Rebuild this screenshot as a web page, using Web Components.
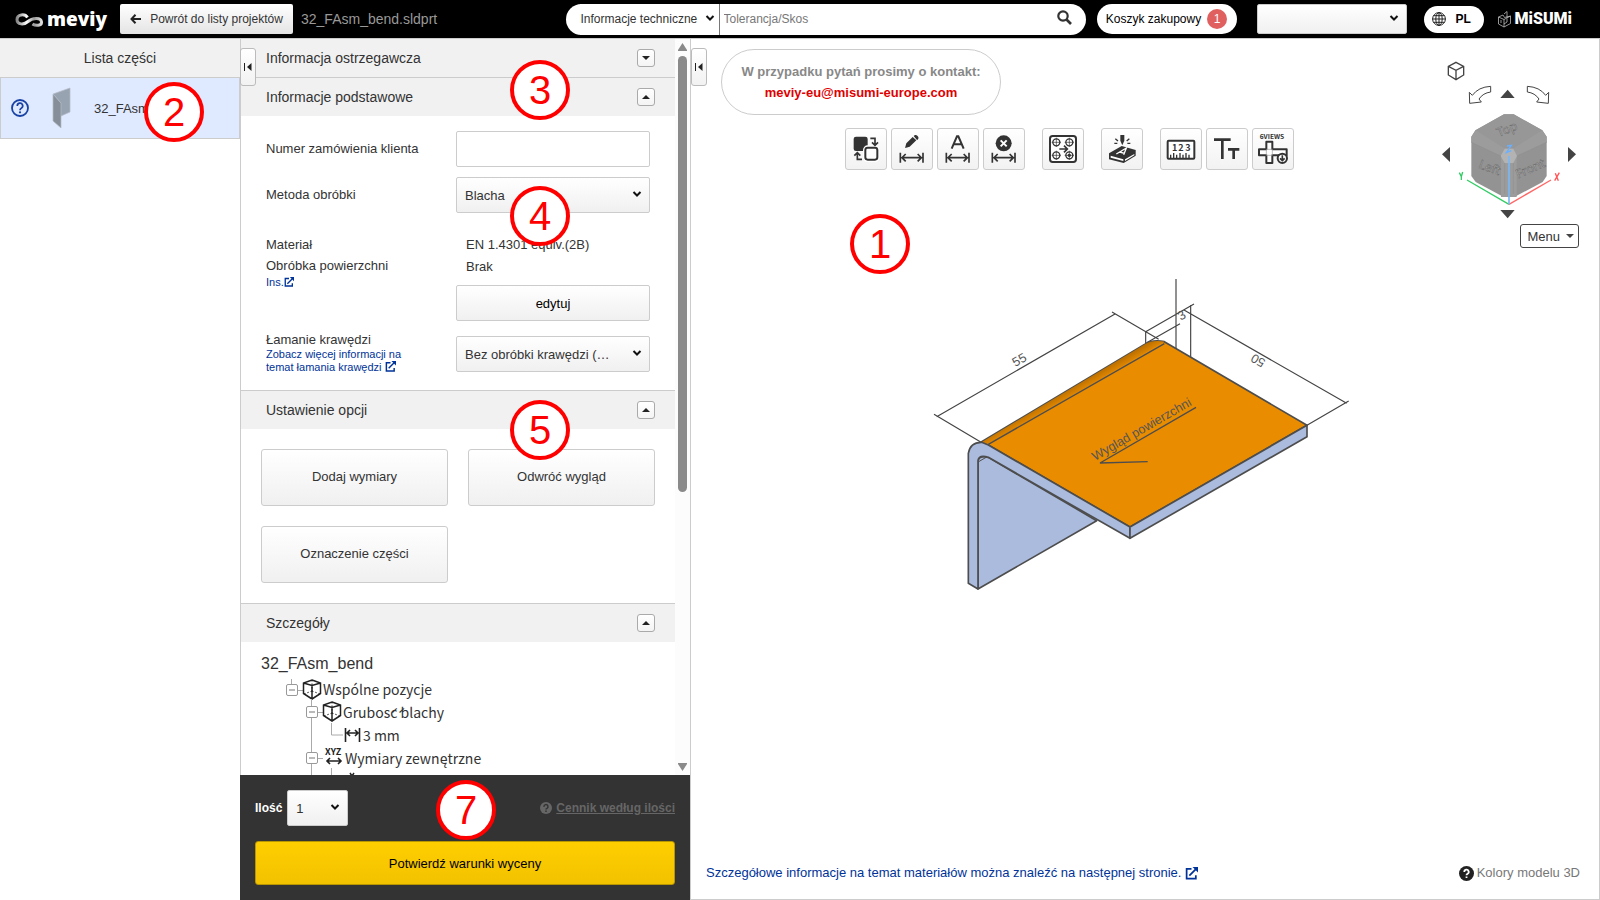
<!DOCTYPE html>
<html lang="pl">
<head>
<meta charset="utf-8">
<title>meviy – 32_FAsm_bend.sldprt</title>
<style>
  html, body { margin: 0; height: 100%; }
  body { font-family: "Liberation Sans", Arial, sans-serif; color: #333; background: #fff; }
</style>
</head>
<body>
<meviy-app></meviy-app>
<script>
const base = `
  *, *::before, *::after { box-sizing: border-box; }
  button, input, select { font: inherit; color: inherit; margin: 0; }
  button { cursor: pointer; padding: 0; }
  a { color: #039; text-decoration: none; }
  svg { display: block; flex: none; }
`;
const define = (name, css, html) => customElements.define(name, class extends HTMLElement {
  constructor() {
    super();
    const root = this.attachShadow({ mode: 'open' });
    const t = document.createElement('template');
    t.innerHTML = `<style>${base}${css}</style>${typeof html === 'function' ? html(this) : html}`;
    root.append(t.content.cloneNode(true));
  }
});
const chevron = `<svg class="chev" width="10" height="8" viewBox="0 0 10 8" aria-hidden="true"><path d="M1.500 2 5 5.500 8.500 2" fill="none" stroke="#111" stroke-width="2"/></svg>`;
const external = (s) => `<svg class="ext" width="${s}" height="${s}" viewBox="0 0 12 12" aria-hidden="true"><path d="M6 1.800H1.500v9H10V7.500M4 8 10 2" fill="none" stroke="#039" stroke-width="1.600"/><path d="M7 0h5v5z" fill="#039"/></svg>`;
const selectCss = `
  .select { position: relative; display: block; }
  .select select { appearance: none; width: 100%; height: 100%; padding: 0 30px 0 8px; border: 1px solid #ccc; border-radius: 2px; background: linear-gradient(#fff, #f0f0f0); font-size: 13px; text-overflow: ellipsis; }
  .select .chev { position: absolute; right: 8px; top: calc(50% - 5px); pointer-events: none; }
`;

/* Numbered callout that floats over the part of the screen it explains */
define('call-out', `
  :host { position: absolute; z-index: 5; width: 60px; height: 60px; border: 4px solid #f00; border-radius: 50%; background: #fff; color: #f00; font-size: 40px; line-height: 52px; text-align: center; pointer-events: none; }
`, `<slot></slot>`);

define('side-tab', `
  :host { position: absolute; z-index: 4; display: block; top: 9px; left: 0; }
  button { display: grid; place-items: center; width: 16px; height: 38px; border: 1px solid #bbb; border-radius: 3px; background: linear-gradient(#fff, #f2f2f2); }
`, `<button aria-label="Zwiń panel"><svg width="8" height="8" viewBox="0 0 8 8"><path d="M.5 0v8" stroke="#222"/><path d="M7.500 0v8L3 4z" fill="#222"/></svg></button>`);

define('app-header', `
  :host { display: flex; align-items: center; height: 38px; padding: 0 28px 0 15px; background: #000; font-size: 12px; }
  .logo { display: flex; align-items: center; gap: 3px; width: 105px; color: #fff; font: 800 19px/20px "Open Sans", "Noto Sans", sans-serif; }
  .logo svg { margin-top: 2px; }
  .back { display: flex; align-items: center; justify-content: center; gap: 9px; width: 173px; height: 30px; border: 0; border-radius: 2px; background: linear-gradient(#fff, #e4e4e4); }
  .file { margin-left: 8px; font-size: 14px; color: #999; }
  .search { display: flex; width: 520px; height: 31px; margin-left: auto; border-radius: 16px; background: #fff; overflow: hidden; }
  .search .select { width: 154px; border-right: 1px solid #777; }
  .search .select select { padding: 0 16px 0 15px; border: 0; background: none; font-size: 12px; }
  .search .select .chev { right: 4px; }
  .search input { flex: 1; min-width: 0; border: 0; outline: 0; padding: 0 4px; background: none; }
  .search input::placeholder { color: #777; opacity: 1; }
  .search button { width: 42px; border: 0; background: none; display: grid; place-items: center; }
  .search button svg { margin-bottom: 3px; }
  .cart { display: flex; align-items: center; justify-content: center; gap: 6px; width: 140px; height: 30px; margin-left: 11px; border-radius: 15px; background: #fff; color: #000; white-space: nowrap; }
  .cart b { width: 20px; height: 20px; border-radius: 10px; background: #e06060; color: #fff; font-weight: 400; line-height: 20px; text-align: center; }
  .user { width: 150px; height: 30px; margin-left: 20px; }
  .user select { border: 0; background: linear-gradient(#fff, #e2e2e2); }
  .user .chev { right: 6px; }
  .lang { display: flex; align-items: center; gap: 10px; width: 60px; height: 27px; margin-left: 17px; padding: 0 8px; border: 0; border-radius: 14px; background: #fff; color: #000; font-weight: 700; }
  .brand { display: flex; align-items: center; gap: 4px; margin-left: 14px; color: #fff; font: 900 16px/20px Roboto, sans-serif; }
` + selectCss, `
  <a class="logo" href="#"><svg width="29" height="15" viewBox="0 0 29 15"><defs><linearGradient id="g"><stop offset="0" stop-color="#888"/><stop offset=".4" stop-color="#fff"/><stop offset=".7" stop-color="#999"/><stop offset="1" stop-color="#ddd"/></linearGradient></defs><path d="M12.500 4.500C10 .5 2 1 2 6.500 2 12 9 12 13 8.500 17 5 26 4 26.500 9c.3 4-6 4-9 2" fill="none" stroke="url(#g)" stroke-width="3"/></svg>meviy</a>
  <button class="back"><svg width="11" height="10" viewBox="0 0 11 10"><path d="M5.500 .8 1.500 5l4 4.200M1.500 5H11" fill="none" stroke="#222" stroke-width="2"/></svg>Powrót do listy projektów</button>
  <span class="file">32_FAsm_bend.sldprt</span>
  <form class="search" onsubmit="return false">
    <span class="select"><select aria-label="Kategoria"><option>Informacje techniczne</option></select>${chevron}</span>
    <input type="text" placeholder="Tolerancja/Skos" aria-label="Szukaj">
    <button aria-label="Szukaj"><svg width="15" height="15" viewBox="0 0 15 15"><circle cx="6" cy="6" r="4.700" fill="none" stroke="#333" stroke-width="2.200"/><path d="m9.500 9.500 4.500 4.500" stroke="#333" stroke-width="2.600"/></svg></button>
  </form>
  <a class="cart" href="#">Koszyk zakupowy <b>1</b></a>
  <span class="select user"><select aria-label="Konto"><option></option></select>${chevron}</span>
  <button class="lang"><svg width="14" height="14" viewBox="0 0 14 14"><g fill="none" stroke="#222"><circle cx="7" cy="7" r="6.400"/><ellipse cx="7" cy="7" rx="3.200" ry="6.400"/><path d="M7 .5v13M.5 7h13M1.500 3.700h11M1.500 10.300h11"/></g></svg>PL</button>
  <a class="brand" href="#"><svg width="13" height="17" viewBox="0 0 13 17"><path d="M.5 6 6 8.500v7.500L.5 13zM6 8.500 12.500 5v7.500L6 16M.5 6 5 4l1.500 2.500L12.500 5M6 3l3-2.500v7M3 9v3M9 8v3l-3 2" fill="none" stroke="#bbb" stroke-width=".8"/></svg>MiSUMi</a>
`);

define('parts-list', `
  :host { display: block; position: relative; width: 240px; flex: none; }
  h2 { margin: 0; height: 38px; background: #f1f1f1; font-size: 14px; font-weight: 400; line-height: 38px; text-align: center; }
  .part { display: flex; align-items: center; width: 100%; height: 62px; padding: 0 10px; border: 1px solid #ccc; background: #dfe9ff; font-size: 13px; text-align: left; }
  .thumb { margin-left: 23px; }
  .name { margin-left: 23px; }
  call-out { left: 144px; top: 43px; }
`, `
  <h2>Lista części</h2>
  <button class="part">
    <svg width="18" height="18" viewBox="0 0 18 18"><circle cx="9" cy="9" r="8" fill="none" stroke="#1741a5" stroke-width="1.800"/><path d="M6.300 7a2.700 2.700 0 1 1 4 2.200c-.9.500-1.300.9-1.300 2" fill="none" stroke="#1741a5" stroke-width="1.700"/><circle cx="9" cy="13.300" r="1.100" fill="#1741a5"/></svg>
    <svg class="thumb" width="19" height="42" viewBox="0 0 19 42"><path d="M1 7 18 1v24L9 29V16z" fill="#98a3b1"/><path d="m1 7 8 9v25l-8-7z" fill="#868f99"/><path d="M1 7 18 1v24l-9 4M1 7l8 9v25l-8-7z" fill="none" stroke="#b4bcc6" stroke-width=".7"/></svg>
    <span class="name">32_FAsm_bend</span>
  </button>
  <call-out>2</call-out>
`);

/* Collapsible section: title attribute "heading", body in the slot */
define('fold-section', `
  :host { display: block; position: relative; }
  header { display: flex; align-items: center; justify-content: space-between; height: 39px; padding: 0 20px 0 25px; border-top: 1px solid #ccc; background: #f1f1f1; }
  :host([first]) header { height: 38px; border-top: 0; }
  h2 { margin: 0; font-size: 14px; font-weight: 400; line-height: 20px; }
  button { display: grid; place-items: center; width: 18px; height: 18px; border: 1px solid #aaa; border-radius: 3px; background: linear-gradient(#fff, #f4f4f4); }
`, (el) => `
  <header><h2>${el.getAttribute('heading')}</h2><button aria-label="Zwiń lub rozwiń"><svg width="8" height="4" viewBox="0 0 8 4"><path d="${el.hasAttribute('closed') ? 'M0 0h8L4 4z' : 'M0 4h8L4 0z'}" fill="#222"/></svg></button></header>
  <slot></slot>
`);

define('basic-info', `
  :host { display: grid; grid-template-columns: 1fr 194px; row-gap: 10px; height: 274px; padding: 15px 25px 14px; font-size: 13px; align-content: start; }
  label { align-self: center; line-height: 20px; }
  input { width: 100%; height: 36px; border: 1px solid #ccc; border-radius: 2px; padding: 0 8px; }
  .select { height: 36px; }
  .mat { margin-top: 11px; line-height: 21px; }
  .mat a, .edge a { display: block; font-size: 11px; line-height: 14px; }
  .mat a { line-height: 12px; }
  .val { margin-top: 11px; }
  .val div { padding-left: 10px; line-height: 22px; }
  .val button { width: 100%; height: 36px; margin-top: 7px; border: 1px solid #ccc; border-radius: 2px; background: linear-gradient(#fff, #f0f0f0); color: #000; }
  .edge label { display: block; line-height: 16px; }
  .edge { margin-top: 1px; }
  .edge a { width: 140px; line-height: 13px; }
  .ext { display: inline-block; vertical-align: -1px; }
  .low { margin-top: 5px; }
` + selectCss, `
  <label for="ord">Numer zamówienia klienta</label><input id="ord" type="text">
  <label for="met">Metoda obróbki</label><span class="select"><select id="met"><option>Blacha</option></select>${chevron}</span>
  <div class="mat">Materiał<br>Obróbka powierzchni<a href="#">Ins.${external(10)}</a></div>
  <div class="val"><div>EN 1.4301 equiv.(2B)</div><div>Brak</div><button>edytuj</button></div>
  <div class="edge"><label for="edg">Łamanie krawędzi</label><a href="#">Zobacz więcej informacji na temat łamania krawędzi ${external(11)}</a></div>
  <span class="select low"><select id="edg"><option>Bez obróbki krawędzi (…</option></select>${chevron}</span>
`);

define('option-buttons', `
  :host { display: grid; grid-template-columns: 1fr 1fr; gap: 20px; padding: 20px; }
  button { height: 57px; border: 1px solid #ccc; border-radius: 3px; background: linear-gradient(#fff, #f0f0f0); font-size: 13px; padding-bottom: 2px; }
`, `<button>Dodaj wymiary</button><button>Odwróć wygląd</button><button>Oznaczenie części</button>`);

const box = (x, y = 11) => `<rect x="${x + .5}" y="${y - 5.5}" width="11" height="11" rx="1.500" fill="#fff" stroke="#999"/><path d="M${x + 3} ${y}h6" stroke="#777"/>`;
const cube = (x) => `<g transform="translate(${x} 0)" fill="none" stroke="#222" stroke-width="1.500"><path d="m10 1 8.500 3v10.500L10 20l-8.500-5.500V4zM1.500 4 10 6.500 18.500 4M10 6.500V20"/><path d="M10 1v12M10 12l-8 3M10 12l8 3" stroke-width="1" stroke-dasharray="1.500 2"/></g>`;
define('detail-tree', `
  :host { display: block; padding: 10px 20px; color: #333; }
  h3 { margin: 0 0 3px; font-size: 16px; font-weight: 400; line-height: 24px; }
  ul { margin: 0; padding: 0; list-style: none; }
  li { display: flex; height: 23px; font: 14px/21px "Noto Sans CJK JP", "Noto Sans", sans-serif; white-space: nowrap; }
  svg { overflow: visible; }
  text { font: 700 9px "Noto Sans CJK JP", "Noto Sans", sans-serif; fill: #222; }
`, `
  <h3>32_FAsm_bend</h3>
  <ul>
    <li><svg width="62" height="23"><path d="M30.500 0v5M37 11.500h5" stroke="#aaa"/>${box(25)}${cube(41)}</svg>Wspólne pozycje</li>
    <li><svg width="82" height="23"><path d="M50.500-3v26M57 10.500h5" stroke="#aaa"/>${box(45, 10)}<g transform="translate(0 -1)">${cube(61)}</g></svg>Grubos\u0301c\u0301 blachy</li>
    <li><svg width="102" height="23"><path d="M50.500 0v23M70.500-2v12H82" fill="none" stroke="#aaa"/><path d="M84.500 3v14M98.500 3v14M86 8h11M89 5l-3 3 3 3M94 5l3 3-3 3" fill="none" stroke="#222" stroke-width="1.600"/></svg>3 mm</li>
    <li><svg width="84" height="23"><path d="M50.500 0v30M57 10.500h5M70.500 20v10" stroke="#aaa"/>${box(45, 10)}<text x="64" y="7">XYZ</text><path d="M66 13h14M69 10l-3 3 3 3M77 10l3 3-3 3" fill="none" stroke="#222" stroke-width="1.600"/><path d="m89 25 4 6M93 25l-4 6" stroke="#222" stroke-width="1.500"/></svg>Wymiary zewnętrzne</li>
  </ul>
`);

define('quote-footer', `
  :host { display: grid; grid-template-columns: auto 61px 1fr; align-items: center; column-gap: 5px; row-gap: 15px; position: relative; flex: none; height: 125px; padding: 15px; align-content: start; background: #333; font-size: 13px; }
  label { color: #fff; font-size: 12px; font-weight: 700; }
  .select { height: 36px; }
  .price { display: flex; justify-content: flex-end; gap: 4px; align-items: center; color: #666; font-size: 12px; font-weight: 700; }
  .price span { text-decoration: underline; }
  .go { grid-column: 1 / -1; height: 44px; border: 1px solid #b89600; border-radius: 3px; background: linear-gradient(#ffce00, #f2c200); color: #000; }
  call-out { left: 196px; top: 5px; }
` + selectCss, `
  <label for="qty">Ilość</label>
  <span class="select"><select id="qty"><option>1</option></select>${chevron}</span>
  <a class="price" href="#"><svg width="12" height="12" viewBox="0 0 12 12"><circle cx="6" cy="6" r="6" fill="#666"/><path d="M4 4.800a2 2 0 1 1 3 1.500c-.8.400-1 .7-1 1.200M6 8.500V10" fill="none" stroke="#333" stroke-width="1.500"/></svg><span>Cennik według ilości</span></a>
  <button class="go">Potwierdź warunki wyceny</button>
  <call-out>7</call-out>
`);

define('config-panel', `
  :host { display: flex; flex-direction: column; position: relative; width: 450px; flex: none; }
  .view { flex: 1; min-height: 0; display: flex; border-left: 1px solid #ccc; }
  .scroll { flex: 1; overflow-y: auto; scrollbar-width: none; }
  .bar { display: flex; flex-direction: column; align-items: center; width: 15px; padding: 4px 0; background: #fcfcfc; }
  .bar i { width: 9px; height: 436px; margin: 5px 0 auto; border-radius: 5px; background: #8a8a8a; }
  .c3 { left: 270px; top: 21px; } .c4 { left: 270px; top: 147px; } .c5 { left: 270px; top: 361px; }
`, `
  <side-tab></side-tab>
  <div class="view">
    <div class="scroll">
      <fold-section first closed heading="Informacja ostrzegawcza"></fold-section>
      <fold-section heading="Informacje podstawowe"><basic-info></basic-info></fold-section>
      <fold-section heading="Ustawienie opcji"><option-buttons></option-buttons></fold-section>
      <fold-section heading="Szczegóły"><detail-tree></detail-tree></fold-section>
    </div>
    <div class="bar"><svg width="9" height="8"><path d="M4.500 0 9 7v1H0V7z" fill="#8a8a8a"/></svg><i></i><svg width="9" height="8"><path d="M4.500 8 9 1V0H0v1z" fill="#8a8a8a"/></svg></div>
  </div>
  <quote-footer></quote-footer>
  <call-out class="c3">3</call-out><call-out class="c4">4</call-out><call-out class="c5">5</call-out>
`);

/* Tool icons are drawn on a 126-unit grid, three units to the pixel */
const span = `<path d="M28 74v30M96 74v30M33 89h58M44 78 33 89l11 11M80 78l11 11-11 11" fill="none" stroke="#333" stroke-width="5"/>`;
const ring = (x, y) => `<g fill="none" stroke="#333" stroke-width="4"><circle cx="${x}" cy="${y}" r="10.500"/><path d="M${x - 14} ${y}h28M${x} ${y - 14}v28" stroke-width="2"/></g>`;
const tools = [
  [['Zamień', `<rect x="26" y="26" width="42" height="43" rx="7" fill="#333"/><rect x="61" y="59" width="36" height="36" rx="7" fill="#fff" stroke="#fff" stroke-width="14"/><rect x="61" y="59" width="36" height="36" rx="7" fill="#fff" stroke="#333" stroke-width="6"/><path d="M76 31h14v17M81 43l9 9 9-9M51 94H37V77M28 83l9-9 9 9" fill="none" stroke="#333" stroke-width="5"/>`],
   ['Edytuj wymiar', `${span}<path d="m42 60 4-14 19-19 11 10-20 19zM68 24l4-3q4-1 7 2l3 4q2 4-2 8l-2 1z" fill="#333"/>`],
   ['Tekst wymiaru', `${span}<path d="M44 62 60 25h4l16 37M50 49h24" fill="none" stroke="#333" stroke-width="6"/>`],
   ['Usuń wymiar', `${span}<circle cx="62" cy="46" r="24" fill="#333"/><path d="m53 37 18 18M71 37 53 55" stroke="#fff" stroke-width="6"/>`]],
  [['Otwory', `<rect x="24" y="24" width="78" height="78" rx="8" fill="#fff" stroke="#333" stroke-width="6"/>${ring(43, 43)}${ring(82, 43)}${ring(43, 82)}${ring(82, 82)}<circle cx="82" cy="82" r="5" fill="#333"/><path d="M52 63h22M66 53l10 10-10 10" fill="none" stroke="#333" stroke-width="5"/>`]],
  [['Grawerowanie', `<path d="M24 76 62 54l42 12v17L68 105 24 94z" fill="#333"/><path d="m29 83 38 11v5L29 89zM72 94l28-16v4L72 99z" fill="#fff"/><path d="M46 78 76 60l-8 20M56 72l14 4" fill="none" stroke="#fff" stroke-width="4"/><path d="M58 21h12v17l-6 14-6-14z" fill="#333"/><path d="m43 32 8 7M40 46h9M85 32l-8 7M88 46h-9" stroke="#333" stroke-width="4"/>`]],
  [['Linijka', `<rect x="23" y="38" width="80" height="54" rx="3" fill="#fff" stroke="#333" stroke-width="6"/><g font-size="27"><text x="36" y="70">1</text><text x="55" y="70">2</text><text x="76" y="70">3</text></g><path d="M32 90V80M41 90V75M50 90V80M60 90V75M69 90V80M78 90V75M87 90V80" stroke="#333" stroke-width="4"/>`],
   ['Rozmiar tekstu', `<path d="M24 35h50M49 35v58M66 64h34M83 64v29" fill="none" stroke="#333" stroke-width="8"/>`],
   ['Sześć widoków', `<text x="23" y="33" font-size="20">6VIEWS</text><path d="M43 41h18v23h43v18H61v23H43V82H21V64h22z" fill="#fff" stroke="#333" stroke-width="6" stroke-linejoin="round"/><path d="M43 64h18v18H43z" fill="none" stroke="#999" stroke-width="2"/><circle cx="91" cy="91" r="14" fill="#fff" stroke="#333" stroke-width="6"/><path d="M91 82v14M84 91l7 7 7-7" fill="none" stroke="#333" stroke-width="5"/>`]]
];
define('tool-bar', `
  :host { display: flex; gap: 17px; }
  div { display: flex; gap: 4px; }
  button { width: 42px; height: 42px; border: 1px solid #ccc; border-radius: 3px; background: linear-gradient(#fff, #f2f2f2); }
  text { font-family: "Noto Sans CJK JP", "Noto Sans", sans-serif; font-weight: 700; fill: #333; }
`, tools.map(g => `<div>${g.map(([n, s]) => `<button aria-label="${n}"><svg width="40" height="40" viewBox="3 3 120 120">${s}</svg></button>`).join('')}</div>`).join(''));

define('view-cube', `
  :host { display: flex; flex-direction: column; align-items: flex-end; gap: 4px; }
  button { display: flex; align-items: center; gap: 6px; height: 24px; margin-right: 1px; padding: 0 4px 0 6px; border: 1px solid #444; border-radius: 3px; background: #fff; font-size: 13px; }
`, `
  <svg width="140" height="160" viewBox="120 180 420 480">
    <g fill="#fff" stroke="#444" stroke-width="4"><path d="m168 187 23 12v26l-23 14-23-14v-26zM145 199l23 12 23-12M168 211v28"/>
    <path d="M272 259v17q-23 3-35 21l7 9-35 4-1-33 9 9q18-25 55-27zM382 259v17q23 3 35 21l-7 9 35 4 1-33-9 9q-18-25-55-27z" stroke-width="3"/></g>
    <path d="M301 294h43l-21-25zM301 630h43l-21 25zM150 441v45l-24-23zM504 441v45l24-23z" fill="#444"/>
    <path d="M312 343h29l86 48 13 19v118l-12 18-85 45h-32l-84-45-13-18V410l12-19z" fill="#939393"/>
    <path d="m227 391 85-48h29l86 48-12 19-76 40h-26l-77-40z" fill="#979797"/>
    <path d="m227 391 86 54h28l86-54 13 19v17l-90 42v122h-47V469l-89-42v-17z" fill="#9c9c9c"/>
    <path d="m302 468 12-22h26l11 22-11 21h-26z" fill="#b3b3b3"/>
    <path d="M314 489v92M340 489v92M214 427l88 41M440 427l-89 41" stroke="#909090" stroke-width="2"/>
    <g font-family="Noto Sans, sans-serif" font-size="37" fill="#bbb" stroke="#666" stroke-width="1.500"><text transform="translate(296 411) rotate(-22)">Top</text><text transform="translate(234 503) rotate(20)">Left</text><text transform="translate(354 536) rotate(-24)">Front</text></g>
    <path d="m201 540 126 73" stroke="#3c6" stroke-width="4"/><path d="m453 540-126 73" stroke="#f66" stroke-width="4"/><path d="M327 613V468" stroke="#7ab8f5" stroke-width="5"/>
    <path d="m321 438 13-2-15 22 15-6" fill="none" stroke="#6ab0ff" stroke-width="4"/>
    <path d="m178 518 6 12 4-14M184 530v10" fill="none" stroke="#3c6" stroke-width="4"/><path d="m466 520 9 22M478 518l-14 24" stroke="#f55" stroke-width="4"/>
  </svg>
  <button>Menu<svg width="8" height="4" viewBox="0 0 8 4"><path d="M0 0h8L4 4z" fill="#444"/></svg></button>
`);

/* Bent sheet with its dimensions, three drawing units to the pixel */
define('part-model', `
  :host { display: block; }
  svg { margin: 0 auto; }
  text { font-family: "Liberation Sans", Arial, sans-serif; fill: #555; }
`, `
  <svg width="450" height="340" viewBox="0 0 1350 1020">
    <defs><linearGradient id="b" gradientUnits="userSpaceOnUse" x1="430" y1="364" x2="445" y2="390"><stop offset="0" stop-color="#b86e00"/><stop offset="1" stop-color="#ea8c00"/></linearGradient></defs>
    <g fill="none" stroke="#444" stroke-width="3.500">
      <path d="M50 440 585 132M42 433l140 83M576 126l140 82M677 185l145-83M677 185v40M680 218l100-57M768 27v212M812 105v160M792 120l488 280M1161 466l125-73"/>
    </g>
    <g stroke="#4d4d4d" stroke-width="5" stroke-linejoin="round">
      <path d="M174 957V572q4-16 31-10l325 190z" fill="#aabbde"/>
      <path d="m180 518 496-296q22-14 57-7l428 251-531 305-425-246z" fill="#ea8c00"/>
      <path d="m182 518 494-296q22-14 57-7L205 523z" fill="url(#b)" stroke="none"/>
      <path d="M205 523 733 221" fill="none" stroke-width="4"/>
      <path d="M145 940V550q6-34 40-33l20 8 425 246v34L205 562q-28-9-31 10v385z" fill="#aabbde"/>
      <path d="m630 771 531-305v34L630 805z" fill="#aabbde"/>
      <path d="m176 575 24-14" stroke-width="3"/>
    </g>
    <g fill="none" stroke="#4d4d4d" stroke-width="4"><path d="M828 412 540 579l143-4"/></g>
    <text font-size="38" transform="translate(525 573) rotate(-30)">Wygląd powierzchni</text>
    <text font-size="38" transform="translate(286 291) rotate(-30)">55</text>
    <text font-size="38" transform="translate(1039 271) rotate(210)">50</text>
    <text font-size="38" transform="translate(782 152) rotate(-30)">3</text>
  </svg>
`);

define('model-viewer', `
  :host { display: grid; grid-template: auto 1fr auto / 1fr auto; position: relative; flex: 1; min-width: 0; border: solid #ccc; border-width: 0 1px 1px; }
  .contact { width: 280px; height: 66px; margin: 10px 0 0 30px; padding-top: 11px; border: 1px solid #ccc; border-radius: 33px; color: #888; font-size: 13px; font-weight: 700; line-height: 21px; text-align: center; white-space: nowrap; }
  .contact a { display: block; color: #e00000; }
  tool-bar { margin: 13px 0 0 154px; }
  view-cube { margin: 21px 19px 0 0; height: 210px; }
  part-model { grid-column: 1 / -1; }
  footer { grid-column: 1 / -1; display: flex; justify-content: space-between; padding: 0 19px 16px 15px; font-size: 13px; line-height: 20px; }
  footer a { display: flex; align-items: center; gap: 4px; }
  footer .colors { color: #777; gap: 3px; }
  call-out { left: 159px; top: 175px; }
`, `
  <side-tab></side-tab>
  <div><div class="contact">W przypadku pytań prosimy o kontakt:<a href="mailto:meviy-eu@misumi-europe.com">meviy-eu@misumi-europe.com</a></div>
  <tool-bar></tool-bar></div>
  <view-cube></view-cube>
  <part-model></part-model>
  <footer><a href="#">Szczegółowe informacje na temat materiałów można znaleźć na następnej stronie. ${external(13)}</a>
  <a class="colors" href="#"><svg width="15" height="15" viewBox="0 0 15 15"><circle cx="7.500" cy="7.500" r="7.500" fill="#222"/><path d="M5.300 6a2.200 2.200 0 1 1 3.300 1.800c-.8.500-1.100.8-1.100 1.500M7.500 10.500V12" fill="none" stroke="#fff" stroke-width="1.800"/></svg>Kolory modelu 3D</a></footer>
  <call-out>1</call-out>
`);

define('meviy-app', `
  :host { display: flex; flex-direction: column; height: 100vh; min-width: 1400px; overflow: hidden; }
  main { flex: 1; min-height: 0; display: flex; border-top: 1px solid #ccc; }
`, `
  <app-header></app-header>
  <main><parts-list></parts-list><config-panel></config-panel><model-viewer></model-viewer></main>
`);
</script>
</body>
</html>
